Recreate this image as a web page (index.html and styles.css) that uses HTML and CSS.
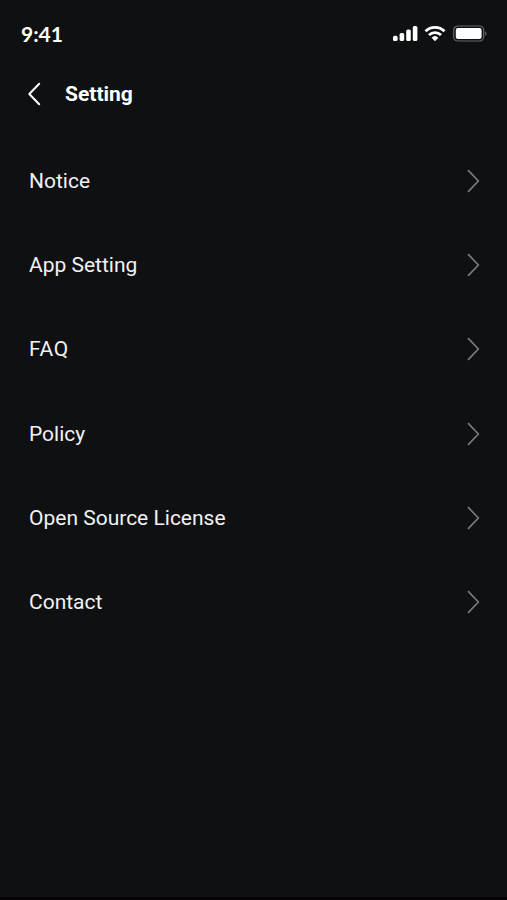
FILE: index.html
```html
<!DOCTYPE html>
<html lang="en">
<head>
<meta charset="utf-8">
<title>Setting</title>
<link rel="stylesheet" href="styles.css">
</head>
<body>
<div class="screen">
  <div class="status">
    <span class="time">9:41</span>
    <svg class="status-icons" width="95" height="18" viewBox="0 0 95 18" fill="#fff">
      <rect x="1" y="10.8" width="4.6" height="5.2" rx="1.6"/>
      <rect x="7.6" y="8" width="4.6" height="8" rx="1.6"/>
      <rect x="14.2" y="4.5" width="4.6" height="11.5" rx="1.6"/>
      <rect x="20.8" y="1" width="4.6" height="15" rx="1.6"/>
      <g fill="none" stroke="#fff" stroke-width="2.8">
        <path d="M33.5 6.2a13.6 13.6 0 0 1 19 0"/>
        <path d="M37 10a8.6 8.6 0 0 1 12 0"/>
      </g>
      <path d="M43 16.2l-3.4-3.5a5 5 0 0 1 6.8 0z"/>
      <rect x="61.7" y="1" width="30" height="15" rx="4.2" fill="none" stroke="#68696a" stroke-width="1.2"/>
      <rect x="63.8" y="3.1" width="25.8" height="10.8" rx="2"/>
      <path d="M93 6.2v4.8q1.7-.8 1.7-2.4t-1.7-2.4z" fill="#55565a"/>
    </svg>
  </div>
  <header class="header">
    <svg class="back" width="14" height="24" viewBox="0 0 14 24"><path d="M12.2 1.7L2.3 12l9.9 10.3"/></svg>
    <h1>Setting</h1>
  </header>
  <ul class="menu">
    <li><span>Notice</span><svg class="next" width="14" height="24" viewBox="0 0 14 24"><path d="M2.5 1.7L12.4 12 2.5 22.3"/></svg></li>
    <li><span>App Setting</span><svg class="next" width="14" height="24" viewBox="0 0 14 24"><path d="M2.5 1.7L12.4 12 2.5 22.3"/></svg></li>
    <li><span class="caps">FAQ</span><svg class="next" width="14" height="24" viewBox="0 0 14 24"><path d="M2.5 1.7L12.4 12 2.5 22.3"/></svg></li>
    <li><span>Policy</span><svg class="next" width="14" height="24" viewBox="0 0 14 24"><path d="M2.5 1.7L12.4 12 2.5 22.3"/></svg></li>
    <li><span>Open Source License</span><svg class="next" width="14" height="24" viewBox="0 0 14 24"><path d="M2.5 1.7L12.4 12 2.5 22.3"/></svg></li>
    <li><span>Contact</span><svg class="next" width="14" height="24" viewBox="0 0 14 24"><path d="M2.5 1.7L12.4 12 2.5 22.3"/></svg></li>
  </ul>
</div>
</body>
</html>
```
FILE: styles.css
```css
* { box-sizing: border-box; }
body { margin: 0; background: #0f1012; color: #f2f2f2; font-family: Roboto, sans-serif; }
.screen { height: 900px; padding-top: 20px; border-bottom: 3px solid #070205; }
.status { height: 30px; padding: 0 20px 0 21px; display: flex; justify-content: space-between; align-items: center; }
.time { margin-top: -2px; font: 700 21px/30px Lato, sans-serif; color: #fff; }
.status-icons { margin-top: -3px; }
.header { height: 87px; padding-left: 27px; display: flex; align-items: center; }
.header h1 { margin: 0 0 0 24px; font-size: 21px; line-height: 28px; font-weight: 700; color: #fff; }
.back, .next { fill: none; stroke-width: 2; stroke-linecap: round; stroke-linejoin: round; }
.back { stroke: #fff; }
.next { stroke: #77787a; stroke-width: 1.8; }
.menu { list-style: none; margin: 1.6px 0 0; padding: 0 27px 0 29px; }
.menu li { height: 84.3px; display: flex; align-items: center; justify-content: space-between; font-size: 21px; line-height: 28px; }
.caps { letter-spacing: .6px; }
```
